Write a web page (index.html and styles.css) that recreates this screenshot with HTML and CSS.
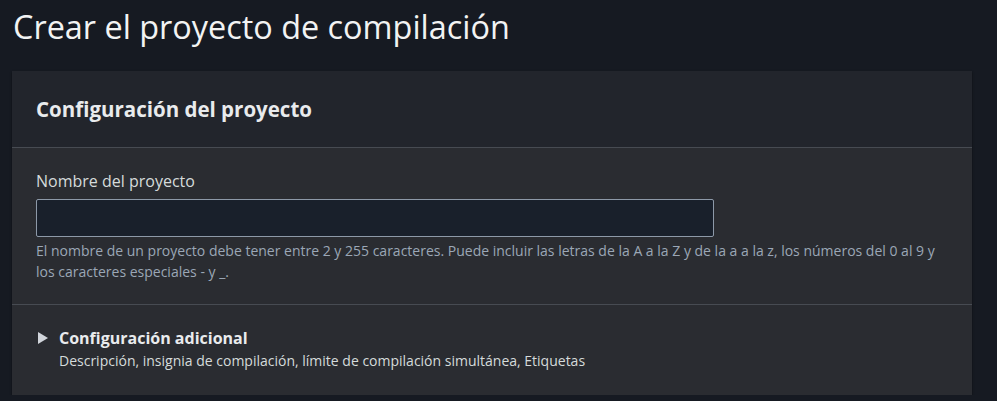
FILE: index.html
```html
<!DOCTYPE html>
<html lang="es">
<head>
<meta charset="utf-8">
<title>Crear el proyecto de compilación</title>
<link rel="stylesheet" href="styles.css">
</head>
<body>
<main class="page">
  <h1 class="page-title">Crear el proyecto de compilación</h1>
  <section class="panel">
    <header class="panel-header">
      <h2 class="panel-title">Configuración del proyecto</h2>
    </header>
    <div class="panel-body">
      <label class="field-label" for="name">Nombre del proyecto</label>
      <input class="field-input" id="name" type="text">
      <p class="field-help">El nombre de un proyecto debe tener entre 2 y 255 caracteres. Puede incluir las letras de la A a la Z y de la a a la z, los números del 0 al 9 y los caracteres especiales - y _.</p>
    </div>
    <div class="panel-expand">
      <div class="expand-head">
        <svg class="caret" width="10" height="12" viewBox="0 0 10 12"><path d="M0 0 L10 6 L0 12 Z" fill="#d1d5db"/></svg>
        <span class="expand-title">Configuración adicional</span>
      </div>
      <p class="expand-desc">Descripción, insignia de compilación, límite de compilación simultánea, Etiquetas</p>
    </div>
  </section>
</main>
</body>
</html>
```
FILE: styles.css
```css
html, body {
  margin: 0;
  padding: 0;
  background: #161a22;
}
body {
  font-family: "Open Sans", "Noto Sans", sans-serif;
  color: #e9ebed;
}
.page {
  padding: 0 25px 0 12px;
}
.page-title {
  margin: 0;
  padding: 2px 0 0 1px;
  height: 69px;
  font-size: 32.4px;
  font-weight: 400;
  line-height: 48px;
  color: #f2f3f3;
}
.panel {
  background: #2a2c31;
  box-shadow: 0 1px 2px rgba(0,0,0,0.5);
}
.panel-header {
  background: #22252c;
  height: 76px;
  border-bottom: 1px solid #474b52;
  display: flex;
  align-items: center;
  padding: 0 24px;
}
.panel-title {
  margin: 0;
  font-size: 20.5px;
  font-weight: 700;
  color: #e9ebed;
}
.panel-body {
  padding: 22px 24px 22px;
  border-bottom: 1px solid #474b52;
}
.field-label {
  display: block;
  font-size: 16px;
  line-height: 22px;
  color: #d5dbdb;
  margin-bottom: 7px;
}
.field-input {
  display: block;
  box-sizing: border-box;
  width: 678px;
  height: 38px;
  margin: 0;
  background: #19202b;
  border: 1px solid #8d99a8;
  border-radius: 2px;
  outline: none;
}
.field-help {
  margin: 3px 0 0;
  font-size: 14px;
  line-height: 21px;
  color: #9ba7b6;
}
.panel-expand {
  padding: 22px 24px 24px;
}
.expand-head {
  display: flex;
  align-items: center;
  gap: 11px;
  margin-left: 2px;
}
.caret {
  flex: none;
}
.expand-title {
  font-size: 16px;
  font-weight: 700;
  line-height: 22px;
  color: #e9ebed;
}
.expand-desc {
  margin: 2px 0 0 23px;
  font-size: 14px;
  line-height: 20px;
  color: #d5dbdb;
}
```
